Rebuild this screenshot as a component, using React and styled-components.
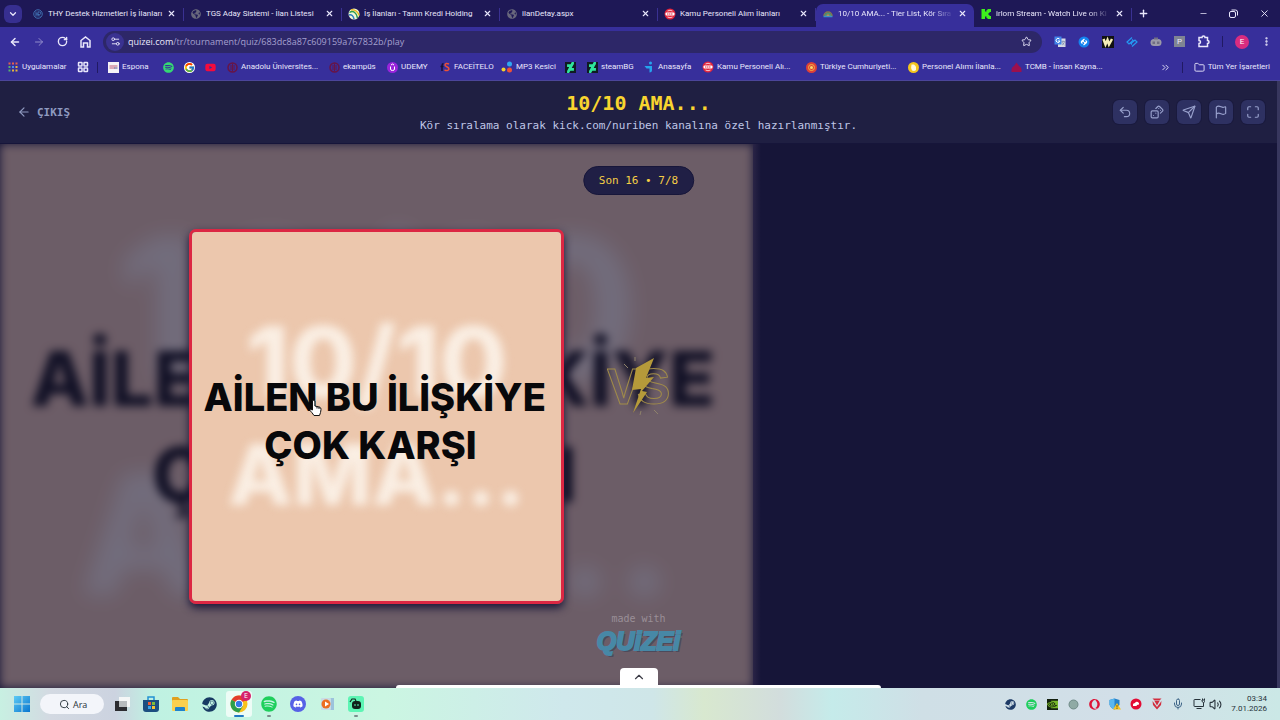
import styled, { createGlobalStyle } from "styled-components";
import {
  ArrowLeft,
  ArrowRight,
  ChevronDown,
  ChevronUp,
  ChevronsRight,
  Dices,
  EllipsisVertical,
  Flag,
  Folder,
  LayoutGrid,
  Maximize,
  Mic,
  Minus,
  Plus,
  RotateCw,
  Search,
  Send,
  Settings2,
  Star,
  Undo2,
  Volume2,
  X,
} from "lucide-react";
import {
  FaDeviantart,
  FaDiscord,
  FaGlobeAmericas,
  FaOpera,
  FaSpotify,
  FaSteam,
  FaYoutube,
} from "react-icons/fa";
import { FcGoogle } from "react-icons/fc";
import { SiNvidia } from "react-icons/si";

/* ---------- small drawings ---------- */

const ThyIcon = () => (
  <svg width="10" height="10" viewBox="0 0 20 20" fill="none" stroke="#3f6fb0" strokeWidth="2">
    <circle cx="10" cy="10" r="8.5" />
    <path d="M6 5v10M6 10h4M10 5v10M10 6h3a2 2 0 0 1 0 5h-3l4 4" />
  </svg>
);

const TarimIcon = () => (
  <svg width="12" height="12" viewBox="0 0 24 24">
    <circle cx="12" cy="12" r="11" fill="#f1f6d8" />
    <path d="M3 9c7-5 14 0 16 11" stroke="#2c9a4b" strokeWidth="3" fill="none" />
    <path d="M6 4c8-2 15 5 16 11" stroke="#e9b91e" strokeWidth="3" fill="none" />
    <path d="M2 14c5-2 9 2 10 8" stroke="#2b7fc3" strokeWidth="3" fill="none" />
  </svg>
);

const KamuIcon = () => (
  <svg width="12" height="12" viewBox="0 0 24 24">
    <circle cx="12" cy="12" r="11" fill="#e3243c" />
    <rect x="3" y="9" width="18" height="6" rx="2" fill="#fff" />
    <path d="M6 12h12" stroke="#e3243c" strokeWidth="2" strokeDasharray="3 1" />
    <path d="M7 6q5-3 10 0M7 18q5 3 10 0" stroke="#fff" strokeWidth="1.5" fill="none" />
  </svg>
);

const RainbowIcon = () => (
  <svg width="10" height="10" viewBox="0 0 20 20" fill="none" strokeWidth="3">
    <path d="M2 14a8 8 0 0 1 16 0" stroke="#8a7a4a" />
    <path d="M5 14a5 5 0 0 1 10 0" stroke="#4f9a6c" />
    <path d="M8 14a2 2 0 0 1 4 0" stroke="#d2a045" />
    <path d="M1 15h18" stroke="#3c8fc4" strokeWidth="3" />
  </svg>
);

const KickIcon = () => (
  <svg width="10" height="10" viewBox="0 0 20 20" fill="#3df01c">
    <path d="M1 0h7v5h3V2h2V0h7v6h-3v2h-2v4h2v2h3v6h-7v-2h-2v-3H8v5H1z" />
  </svg>
);

const AppsIcon = () => (
  <svg width="10" height="10" viewBox="0 0 20 20">
    <path d="M1 1h4v4H1zM8 1h4v4H8zM15 1h4v4h-4z" fill="#e8604c" />
    <path d="M1 8h4v4H1z" fill="#58b36a" />
    <path d="M8 8h4v4H8z" fill="#4b8df0" />
    <path d="M15 8h4v4h-4zM8 15h4v4H8zM15 15h4v4h-4z" fill="#e5b43a" />
    <path d="M1 15h4v4H1z" fill="#58b36a" />
  </svg>
);

const EsponaIcon = () => (
  <svg width="11" height="11" viewBox="0 0 22 22">
    <rect width="22" height="22" fill="#f5f3f6" />
    <path d="M3 8h16M3 12h10" stroke="#c1607a" strokeWidth="2" />
    <path d="M12 12h7" stroke="#58568b" strokeWidth="2" />
  </svg>
);

const AnadoluIcon = () => (
  <svg width="11" height="11" viewBox="0 0 22 22" fill="none" stroke="#671447" strokeWidth="3">
    <circle cx="11" cy="11" r="9" />
    <path d="M11 3v16M8 6v10M14 6v10" strokeWidth="2" />
  </svg>
);

const UdemyIcon = () => (
  <svg width="11" height="11" viewBox="0 0 22 22" fill="none" stroke="#fff" strokeWidth="2">
    <circle cx="11" cy="11" r="11" fill="#9a25dc" stroke="none" />
    <path d="M7 9v5a4 3 0 0 0 8 0V9M8 6l3-2 3 2" />
  </svg>
);

const FaceitIcon = () => (
  <svg width="10" height="10" viewBox="0 0 20 20" fill="none" strokeWidth="3">
    <path d="M4 18V7q0-3 3-4M1 9h6" stroke="#171238" />
    <path d="M18 4q-7-3-8 2c0 4 8 3 8 8q-2 5-9 2" stroke="#ef5136" />
  </svg>
);

const Mp3Icon = () => (
  <svg width="12" height="12" viewBox="0 0 24 24">
    <circle cx="17" cy="6" r="5" fill="#2fa8f2" />
    <circle cx="5" cy="17" r="4" fill="#f3d12d" />
    <circle cx="17" cy="18" r="5" fill="#ee5136" />
  </svg>
);

const AnasayfaIcon = () => (
  <svg width="10" height="12" viewBox="0 0 20 24" fill="#25a4ee">
    <circle cx="13" cy="4" r="3" />
    <path d="M1 10h15v9q0 4-5 4v-8H5z" />
  </svg>
);

const TcIcon = () => (
  <svg width="11" height="11" viewBox="0 0 22 22">
    <circle cx="11" cy="11" r="11" fill="#dd3f38" />
    <circle cx="11" cy="11" r="6" fill="none" stroke="#f0b642" strokeWidth="2" />
    <circle cx="11" cy="11" r="3" fill="#fadb6a" />
  </svg>
);

const PersonelIcon = () => (
  <svg width="11" height="11" viewBox="0 0 22 22">
    <circle cx="11" cy="11" r="11" fill="#f4c51e" />
    <path d="M7 5h5l4 4v7q-3 3-8 1-3-5-1-12z" fill="#fff8dc" />
  </svg>
);

const TcmbIcon = () => (
  <svg width="11" height="11" viewBox="0 0 22 22" fill="#9c104d">
    <path d="M11 1l5 7q5 2 5 7v5H1v-5q0-5 5-7z" />
  </svg>
);

const TranslateIcon = () => (
  <svg width="12" height="12" viewBox="0 0 24 24">
    <rect x="8" y="5" width="15" height="17" fill="#d6dbe4" />
    <rect x="1" y="1" width="14" height="16" fill="#4385ea" />
    <path d="M11 6a4 4 0 1 0 1 4H8" stroke="#fff" strokeWidth="2" fill="none" />
    <path d="M15 11h7M18 9v2M21 12q-2 5-5 6M16 12q2 4 5 6" stroke="#5a6f96" fill="none" />
  </svg>
);

const ShazamIcon = ({ disc }) => (
  <svg width="12" height="12" viewBox="0 0 24 24" fill="none" stroke={disc ? "#fff" : "#2499f2"} strokeWidth="2.4">
    {disc && <circle cx="12" cy="12" r="11" fill="#1483ee" stroke="none" />}
    {disc ? (
      <path d="M13 6l-5 4q-3 3 1 5M11 18l5-4q3-3-1-5M9 12l3-2M12 14l3-2" />
    ) : (
      <path d="M12 3L2 12l4 4 7-6M8 13l4 4M12 21l10-9-4-4-7 6M12 7l4 4" />
    )}
  </svg>
);

const WIcon = () => (
  <svg width="12" height="12" viewBox="0 0 24 24">
    <rect width="24" height="24" fill="#111" />
    <path d="M3 6l4 11 4-9 3 9 6-11" fill="none" stroke="#f7eeb8" strokeWidth="5" />
  </svg>
);

const MaskIcon = () => (
  <svg width="12" height="12" viewBox="0 0 24 24">
    <rect x="1" y="6" width="22" height="14" rx="7" fill="#9b9aa8" />
    <path d="M5 11h5v5H5zM14 11h5v5h-5zM8 3h8v4H8z" fill="#706e83" />
  </svg>
);

const HomeIcon = () => (
  <svg width="11" height="12" viewBox="0 0 22 24" fill="none" stroke="currentColor" strokeWidth="3">
    <path d="M2 22V9l9-7 9 7v13h-5v-8H7v8z" />
  </svg>
);

const PuzzleIcon = () => (
  <svg width="13" height="13" viewBox="0 0 26 26" fill="none" stroke="currentColor" strokeWidth="3">
    <path d="M4 5h6a3 3 0 0 1 6 0h5v6a3 3 0 0 1 0 6v6H4v-6a3 3 0 0 0 0-6z" />
  </svg>
);

const RestoreIcon = () => (
  <svg width="9" height="9" viewBox="0 0 18 18" fill="none" stroke="currentColor" strokeWidth="2">
    <rect x="1" y="5" width="12" height="12" rx="3" />
    <path d="M5 2h8q4 0 4 4v7" />
  </svg>
);

const WindowsIcon = () => (
  <svg width="16" height="16" viewBox="0 0 16 16">
    <defs>
      <linearGradient id="win" x1="0" y1="0" x2="1" y2="1">
        <stop stopColor="#5fcbf5" />
        <stop offset="1" stopColor="#0876cf" />
      </linearGradient>
    </defs>
    <path d="M0 0h7.5v7.5H0zM8.500 0H16v7.500H8.500zM0 8.500h7.500V16H0zM8.500 8.500H16V16H8.500z" fill="url(#win)" />
  </svg>
);

const TaskViewIcon = () => (
  <svg width="16" height="16" viewBox="0 0 16 16">
    <rect x="5" y="1" width="11" height="10" fill="#f5f7f7" />
    <path d="M1 5h4v6h8v4H1z" fill="#2c2c30" />
    <path d="M5 5h8v6H5z" fill="#b7bbbd" />
  </svg>
);

const StoreIcon = () => (
  <svg width="16" height="16" viewBox="0 0 16 16">
    <path d="M5 4V1h6v3" fill="none" stroke="#2391d2" strokeWidth="1.500" />
    <path d="M0 4h16v9q0 3-3 3H3q-3 0-3-3z" fill="#1c4f80" />
    <path d="M5 6h3v3H5z" fill="#ef5b36" />
    <path d="M9 6h3v3H9z" fill="#7ebd3a" />
    <path d="M5 10h3v3H5z" fill="#39a5ee" />
    <path d="M9 10h3v3H9z" fill="#f8c332" />
  </svg>
);

const ExplorerIcon = () => (
  <svg width="16" height="16" viewBox="0 0 16 16">
    <path d="M0 2q0-1 1-1h5l2 2h7q1 0 1 1v6H0z" fill="#e0a01f" />
    <rect y="4" width="16" height="11" rx="1" fill="#fbd04f" />
    <path d="M3 15v-3q0-1 1-1h8q1 0 1 1v3z" fill="#1f83cc" />
  </svg>
);

const ChromeIcon = () => (
  <svg width="18" height="18" viewBox="0 0 18 18">
    <circle cx="9" cy="9" r="8.500" fill="#f8c21c" />
    <path d="M9 9L1.600 4.800A8.500 8.500 0 0 1 16.400 4.800z" fill="#e33b2e" />
    <path d="M9 9L1.600 4.800A8.500 8.500 0 0 0 9 17.500l4-6.500z" fill="#2d9e4b" />
    <circle cx="9" cy="9" r="4.200" fill="#fff" />
    <circle cx="9" cy="9" r="3.200" fill="#3478e6" />
  </svg>
);

const MediaIcon = () => (
  <svg width="14" height="14" viewBox="0 0 14 14">
    <rect x="3" y="1" width="11" height="12" fill="#9cc3dc" />
    <rect x="1" y="1" width="10" height="12" rx="1" fill="#c9dbe5" />
    <circle cx="6" cy="7" r="4.500" fill="#ec6d21" />
    <path d="M5 4.500v5L9 7z" fill="#fff" />
  </svg>
);

const RobotIcon = () => (
  <svg width="16" height="16" viewBox="0 0 16 16">
    <rect width="16" height="16" rx="3" fill="#5df5b4" />
    <path d="M2 6l2-3h3l1 2" fill="none" stroke="#10231d" strokeWidth="1.200" />
    <rect x="4" y="5" width="9" height="8" rx="3" fill="#10231d" />
    <path d="M7 8v2M10 8v2" stroke="#5df5b4" />
  </svg>
);

const StatusIcon = () => (
  <svg width="11" height="11" viewBox="0 0 11 11">
    <circle cx="5.500" cy="5.500" r="4.500" fill="#8faaa5" stroke="#6f8a87" />
  </svg>
);

const ShieldIcon = () => (
  <svg width="12" height="12" viewBox="0 0 24 24">
    <path d="M11 1l10 3v9q-2 7-10 10Q3 20 1 13V4z" fill="#2481c9" />
    <path d="M11 1v22Q3 20 1 13V4z" fill="#5ab7ee" />
    <path d="M16 10l8 13H8z" fill="#f7c425" />
    <path d="M16 14v5M16 20v2" stroke="#4a3a10" strokeWidth="1.500" />
  </svg>
);

const RedDiscIcon = () => (
  <svg width="12" height="12" viewBox="0 0 24 24">
    <circle cx="12" cy="12" r="11" fill="#e30b35" />
    <path d="M6 16V13q0-3 4-3 2-4 6-2 3 2 2 5l-4 1-1 2z" fill="#fff" />
  </svg>
);

const ValorIcon = () => (
  <svg width="10" height="12" viewBox="0 0 20 24" fill="#d22d3e">
    <path d="M1 1h18l-4 4H5zM5 6h10l-5 9z" />
    <path d="M1 6l9 12 9-12-1 8-8 9-8-9z" />
  </svg>
);

const NetworkIcon = () => (
  <svg width="12" height="12" viewBox="0 0 24 24" fill="none" stroke="currentColor" strokeWidth="2">
    <path d="M15 3H3q-1 0-1 1v12q0 1 1 1h18v-5M7 21h10" />
    <path d="M19 1v3M23 1v3M18 4h6v3q-3 4-6 0zM21 9v3" />
  </svg>
);

const VersusMark = () => (
  <svg width="64" height="60" viewBox="0 0 64 60">
    <g fill="none" stroke="#a08b49" strokeWidth="1" fontFamily="Liberation Sans" fontWeight="700" fontSize="50">
      <text x="0" y="48">V</text>
      <text x="30" y="48">S</text>
    </g>
    <path d="M47 2L29 12l-4 22 9-1-8 24 14-21-5-1 12-14-8 1z" fill="#b59a3a" />
    <path d="M17 8l4 4M28 1v4M47 54l4 4M34 55l-1 4" stroke="#8f826a" />
  </svg>
);

const HandCursor = () => (
  <svg width="13" height="18" viewBox="0 0 13 18" fill="#fff" stroke="#111" strokeWidth="1">
    <path d="M3.500 10V2q1.200-1.500 2.400 0v5l5 1.200q1.200.5 1.100 2.300-.2 3-1.500 6H5Q3 13.500 1 11.500 1.500 9.500 3.500 11z" />
    <path d="M8 7.500v2M10 8v2" />
  </svg>
);

/* ---------- data ---------- */

const tabs = [
  { title: "THY Destek Hizmetleri İş İlanları", icon: <ThyIcon /> },
  { title: "TGS Aday Sistemi - İlan Listesi", icon: <FaGlobeAmericas size={10} color="#68677c" /> },
  { title: "İş İlanları - Tarım Kredi Holding", icon: <TarimIcon /> },
  { title: "ilanDetay.aspx", icon: <FaGlobeAmericas size={10} color="#68677c" /> },
  { title: "Kamu Personeli Alım İlanları", icon: <KamuIcon /> },
  { title: "10/10 AMA... - Tier List, Kör Sıra", icon: <RainbowIcon />, active: true, fade: true },
  { title: "irlom Stream - Watch Live on Ki", icon: <KickIcon />, fade: true },
];

const deviant = (
  <FaDeviantart size={11} color="#2fe59c" style={{ background: "#101b22" }} />
);

const bookmarks = [
  { label: "Uygulamalar", icon: <AppsIcon />, width: 70 },
  { name: "Gruplar", icon: <LayoutGrid size={12} strokeWidth={3} />, width: 20 },
  { divider: true },
  { label: "Espona", icon: <EsponaIcon />, width: 55 },
  { name: "Spotify", icon: <FaSpotify size={11} color="#35d873" />, width: 21 },
  { name: "Google", icon: <FcGoogle size={11} style={{ background: "#fff", borderRadius: 6 }} />, width: 21 },
  { name: "YouTube", icon: <FaYoutube size={11} color="#f50b3c" />, width: 22 },
  { label: "Anadolu Üniversites...", icon: <AnadoluIcon />, width: 102 },
  { label: "ekampüs", icon: <AnadoluIcon />, width: 58 },
  { label: "UDEMY", icon: <UdemyIcon />, width: 53 },
  { label: "FACEİTELO", icon: <FaceitIcon />, width: 62 },
  { label: "MP3 Kesici", icon: <Mp3Icon />, width: 63 },
  { name: "DeviantArt", icon: deviant, width: 22 },
  { label: "steamBG", icon: deviant, width: 57 },
  { label: "Anasayfa", icon: <AnasayfaIcon />, width: 59 },
  { label: "Kamu Personeli Alı...", icon: <KamuIcon />, width: 103 },
  { label: "Türkiye Cumhuriyeti...", icon: <TcIcon />, width: 102 },
  { label: "Personel Alımı İlanla...", icon: <PersonelIcon />, width: 103 },
  { label: "TCMB - İnsan Kayna...", icon: <TcmbIcon />, width: 103 },
];

const actions = [
  { name: "Geri al", Icon: Undo2 },
  { name: "Rastgele", Icon: Dices },
  { name: "Paylaş", Icon: Send },
  { name: "Bildir", Icon: Flag },
  { name: "Tam ekran", Icon: Maximize },
];

const tray = [
  { name: "Steam", icon: <FaSteam size={11} color="#1d3a66" /> },
  { name: "Spotify", icon: <FaSpotify size={11} color="#1ecf5c" /> },
  { name: "Nvidia", icon: <SiNvidia size={11} color="#77b82a" style={{ background: "#14210f" }} /> },
  { name: "Durum", icon: <StatusIcon /> },
  { name: "Opera", icon: <FaOpera size={11} color="#dd1437" /> },
  { name: "Güvenlik", icon: <ShieldIcon /> },
  { name: "Bulut", icon: <RedDiscIcon /> },
  { name: "Vanguard", icon: <ValorIcon /> },
  { name: "Mikrofon", icon: <Mic size={12} color="#3e6487" /> },
];

/* ---------- parts ---------- */

const BrowserChrome = () => (
  <Chrome>
    <TabStrip>
      <TabSearch type="button" aria-label="Sekmelerde ara">
        <ChevronDown size={10} strokeWidth={3} />
      </TabSearch>
      {tabs.map((tab) => (
        <Tab key={tab.title} $active={tab.active}>
          <IconSlot>{tab.icon}</IconSlot>
          <TabTitle type="button" $fade={tab.fade}>
            {tab.title}
          </TabTitle>
          <IconButton type="button" aria-label="Sekmeyi kapat">
            <X size={9} strokeWidth={3} />
          </IconButton>
        </Tab>
      ))}
      <NewTab type="button" aria-label="Yeni sekme">
        <Plus size={11} strokeWidth={3} />
      </NewTab>
      <WindowControls>
        <IconButton type="button" aria-label="Küçült">
          <Minus size={9} />
        </IconButton>
        <IconButton type="button" aria-label="Geri yükle">
          <RestoreIcon />
        </IconButton>
        <IconButton type="button" aria-label="Kapat">
          <X size={11} />
        </IconButton>
      </WindowControls>
    </TabStrip>
    <Toolbar>
      <NavButtons>
        <IconButton type="button" aria-label="Geri">
          <ArrowLeft size={12} strokeWidth={3} />
        </IconButton>
        <IconButton type="button" aria-label="İleri" $dim>
          <ArrowRight size={12} />
        </IconButton>
        <IconButton type="button" aria-label="Yenile">
          <RotateCw size={11} strokeWidth={3} />
        </IconButton>
        <IconButton type="button" aria-label="Ana sayfa">
          <HomeIcon />
        </IconButton>
      </NavButtons>
      <Omnibox>
        <SiteInfo type="button" aria-label="Site bilgileri">
          <Settings2 size={11} />
        </SiteInfo>
        <label htmlFor="url">quizei.com</label>
        <UrlInput
          id="url"
          type="text"
          defaultValue="/tr/tournament/quiz/683dc8a87c609159a767832b/play"
        />
        <IconButton type="button" aria-label="Yer işareti ekle">
          <Star size={11} />
        </IconButton>
      </Omnibox>
      <Extensions>
        <TranslateIcon />
        <ShazamIcon disc />
        <WIcon />
        <ShazamIcon />
        <MaskIcon />
        <ParkBadge>P</ParkBadge>
        <PuzzleIcon />
        <Divider />
        <Avatar type="button">E</Avatar>
        <IconButton type="button" aria-label="Menü">
          <EllipsisVertical size={11} strokeWidth={3} />
        </IconButton>
      </Extensions>
    </Toolbar>
    <Bookmarks>
      {bookmarks.map((item, i) =>
        item.divider ? (
          <BookmarkDivider key={i} />
        ) : (
          <Bookmark key={i} href="#" aria-label={item.name} $width={item.width}>
            <IconSlot>{item.icon}</IconSlot>
            {item.label}
          </Bookmark>
        )
      )}
      <BookmarksEnd>
        <IconButton type="button" aria-label="Diğer yer işaretleri">
          <ChevronsRight size={11} />
        </IconButton>
        <Divider />
        <Bookmark href="#">
          <Folder size={11} />
          Tüm Yer İşaretleri
        </Bookmark>
      </BookmarksEnd>
    </Bookmarks>
  </Chrome>
);

const QuestionArt = ({ scale = 1, hidden }) => (
  <Art aria-hidden={hidden}>
    <Ghost $scale={scale}>
      <GhostLine $size={98 * scale} $height={118 * scale}>
        10/10
      </GhostLine>
      <GhostLine $size={84 * scale} $height={108 * scale}>
        AMA...
      </GhostLine>
    </Ghost>
    <Caption $scale={scale}>
      AİLEN BU İLİŞKİYE
      <br />
      ÇOK KARŞI&nbsp;
    </Caption>
  </Art>
);

const QuizHeader = () => (
  <Header>
    <ExitLink href="#">
      <ArrowLeft size={14} />
      ÇIKIŞ
    </ExitLink>
    <Heading>
      <Title>10/10 AMA...</Title>
      <Subtitle>Kör sıralama olarak kick.com/nuriben kanalına özel hazırlanmıştır.</Subtitle>
    </Heading>
    <Actions>
      {actions.map(({ name, Icon }) => (
        <ActionButton key={name} type="button" aria-label={name}>
          <Icon size={14} />
        </ActionButton>
      ))}
    </Actions>
  </Header>
);

const Arena = () => (
  <Stage>
    <LeftSide>
      <Backdrop>
        <QuestionArt scale={2} hidden />
      </Backdrop>
      <Card type="button">
        <QuestionArt />
      </Card>
    </LeftSide>
    <RightSide />
    <RoundBadge>Son 16 • 7/8</RoundBadge>
    <Versus>
      <VersusMark />
    </Versus>
    <MadeWith>
      made with
      <Brand>QUiZEi</Brand>
    </MadeWith>
    <Drawer>
      <DrawerTab type="button" aria-label="Paneli aç">
        <ChevronUp size={14} />
      </DrawerTab>
      <DrawerEdge />
    </Drawer>
    <Pointer>
      <HandCursor />
    </Pointer>
  </Stage>
);

const Taskbar = () => (
  <Bar>
    <TaskButton type="button" aria-label="Başlat">
      <WindowsIcon />
    </TaskButton>
    <SearchButton type="button">
      <Search size={11} />
      Ara
    </SearchButton>
    <AppList>
      <TaskButton type="button" aria-label="Görev görünümü">
        <TaskViewIcon />
      </TaskButton>
      <TaskButton type="button" aria-label="Mağaza">
        <StoreIcon />
      </TaskButton>
      <TaskButton type="button" aria-label="Dosya Gezgini">
        <ExplorerIcon />
      </TaskButton>
      <TaskButton type="button" aria-label="Steam">
        <FaSteam size={15} color="#173a63" />
      </TaskButton>
      <TaskButton type="button" aria-label="Chrome" $active>
        <ChromeIcon />
        <Notice>E</Notice>
      </TaskButton>
      <TaskButton type="button" aria-label="Spotify" $open>
        <FaSpotify size={16} color="#1ecf5c" />
      </TaskButton>
      <TaskButton type="button" aria-label="Discord">
        <Disc>
          <FaDiscord size={10} />
        </Disc>
      </TaskButton>
      <TaskButton type="button" aria-label="Medya Oynatıcı">
        <MediaIcon />
      </TaskButton>
      <TaskButton type="button" aria-label="Robot" $open>
        <RobotIcon />
      </TaskButton>
    </AppList>
    <Tray>
      {tray.map((item) => (
        <TrayButton key={item.name} type="button" aria-label={item.name}>
          {item.icon}
        </TrayButton>
      ))}
      <TrayGroup>
        <NetworkIcon />
        <Volume2 size={13} />
      </TrayGroup>
      <Clock>
        <span>03:34</span>
        <span>7.01.2026</span>
      </Clock>
    </Tray>
  </Bar>
);

const App = () => (
  <>
    <GlobalStyle />
    <Desktop>
      <BrowserChrome />
      <Page>
        <QuizHeader />
        <Arena />
      </Page>
      <Taskbar />
    </Desktop>
  </>
);

/* ---------- styles ---------- */

const GlobalStyle = createGlobalStyle`
  * {
    box-sizing: border-box;
  }
  body {
    margin: 0;
    background: #171638;
  }
  button, input {
    font: inherit;
    color: inherit;
    border: 0;
    padding: 0;
    background: none;
  }
  a {
    color: inherit;
    text-decoration: none;
  }
  svg {
    display: block;
    flex: none;
  }
`;

const Desktop = styled.div`
  display: flex;
  flex-direction: column;
  height: 100vh;
  overflow: hidden;
`;

const Chrome = styled.div`
  color: #e9e7fb;
  background: #372f9b;
  border-bottom: 1px solid #4b459a;
  font: 8px/12px Roboto, "Noto Sans", sans-serif;
`;

const TabStrip = styled.div`
  display: flex;
  align-items: center;
  height: 27px;
  background: #1e1856;
`;

const TabSearch = styled.button`
  display: grid;
  place-items: center;
  width: 18px;
  height: 18px;
  margin: 0 4px;
  border-radius: 6px;
  background: #372f90;
`;

const Tab = styled.div`
  display: flex;
  align-items: center;
  gap: 4px;
  flex: 0 1 158px;
  min-width: 0;
  align-self: flex-end;
  height: 23px;
  padding: 0 7px 4px 6px;
  border-radius: 7px 7px 0 0;
  background: ${({ $active }) => ($active ? "#372f9b" : "none")};
  border-right: ${({ $active }) => ($active ? "0" : "1px solid transparent")};
  border-image: ${({ $active }) =>
    $active ? "none" : "linear-gradient(transparent 20%, #3a3192 20% 70%, transparent 70%) 1"};
`;

const TabTitle = styled.button`
  flex: 1;
  min-width: 0;
  text-align: left;
  white-space: nowrap;
  overflow: hidden;
  mask-image: ${({ $fade }) => ($fade ? "linear-gradient(to right, #000 80%, transparent)" : "none")};
`;

const IconSlot = styled.span`
  display: grid;
  place-items: center;
  flex: none;
  width: 12px;
  height: 12px;
`;

const IconButton = styled.button`
  display: grid;
  place-items: center;
  opacity: ${({ $dim }) => ($dim ? 0.5 : 1)};
`;

const NewTab = styled(IconButton)`
  margin-left: 6px;
`;

const WindowControls = styled.div`
  display: flex;
  gap: 21px;
  margin-left: auto;
  padding-right: 10px;
`;

const Toolbar = styled.div`
  display: flex;
  align-items: center;
  height: 29px;
`;

const NavButtons = styled.div`
  display: flex;
  gap: 12px;
  padding: 0 12px 0 9px;
`;

const Omnibox = styled.div`
  display: flex;
  align-items: center;
  flex: 1;
  height: 22px;
  padding: 0 10px 0 3px;
  border-radius: 11px;
  background: #2d2768;
  font: 9px/12px "Open Sans", "Noto Sans", sans-serif;
`;

const UrlInput = styled.input`
  flex: 1;
  min-width: 0;
  color: #a5a0cf;
  outline: none;
`;

const SiteInfo = styled.button`
  display: grid;
  place-items: center;
  width: 18px;
  height: 18px;
  margin-right: 4px;
  border-radius: 9px;
  background: #3a3291;
`;

const Extensions = styled.div`
  display: flex;
  align-items: center;
  gap: 12px;
  padding: 0 8px 0 12px;
`;

const ParkBadge = styled.span`
  width: 11px;
  height: 11px;
  line-height: 11px;
  text-align: center;
  background: #7f8493;
`;

const Divider = styled.span`
  width: 1px;
  height: 11px;
  background: #211a63;
`;

const Avatar = styled.button`
  width: 14px;
  height: 14px;
  line-height: 14px;
  border-radius: 50%;
  color: #fff;
  background: #d92c80;
`;

const Bookmarks = styled.nav`
  display: flex;
  align-items: center;
  height: 24px;
  padding: 0 10px 2px 7px;
`;

const Bookmark = styled.a`
  display: flex;
  align-items: center;
  gap: 3px;
  flex: none;
  width: ${({ $width }) => ($width ? `${$width}px` : "auto")};
  white-space: nowrap;
`;

const BookmarkDivider = styled(Divider)`
  margin-right: 9px;
`;

const BookmarksEnd = styled.div`
  display: flex;
  align-items: center;
  gap: 11px;
  margin-left: auto;
`;

const Page = styled.main`
  display: flex;
  flex-direction: column;
  flex: 1;
  min-height: 0;
  border-right: 3px solid #38375e;
  background: #171638;
  font-family: "DejaVu Sans Mono", monospace;
`;

const Header = styled.header`
  display: grid;
  grid-template-columns: 1fr auto 1fr;
  align-items: center;
  height: 63px;
  padding: 0 12px;
  background: #1f1f42;
  border-bottom: 1px solid #16153a;
`;

const ExitLink = styled.a`
  display: flex;
  align-items: center;
  gap: 6px;
  padding-left: 5px;
  color: #8f9ac0;
  font-size: 11px;
  font-weight: 700;
`;

const Heading = styled.div`
  padding-top: 2px;
  text-align: center;
`;

const Title = styled.h1`
  margin: 0;
  color: #f9d52f;
  font-size: 20px;
  line-height: 25px;
`;

const Subtitle = styled.p`
  margin: 0;
  color: #bfc6e6;
  font-size: 11px;
  line-height: 20px;
`;

const Actions = styled.div`
  display: flex;
  justify-content: flex-end;
  gap: 8px;
`;

const ActionButton = styled.button`
  display: grid;
  place-items: center;
  width: 24px;
  height: 24px;
  border-radius: 6px;
  color: #98a0cc;
  background: #2e3162;
  box-shadow: 0 0 0 1px #1a1a3e;
`;

const Stage = styled.section`
  position: relative;
  display: flex;
  flex: 1;
  min-height: 0;
`;

const LeftSide = styled.div`
  position: relative;
  display: grid;
  place-items: center;
  flex: 0 0 59%;
  overflow: hidden;
`;

const RightSide = styled.div`
  flex: 1;
  background: linear-gradient(to right, #2a2446, #161538 8px);
`;

const Backdrop = styled.div`
  position: absolute;
  inset: 0;
  display: flex;
  opacity: 0.4;
  filter: blur(5px);
`;

const Art = styled.span`
  position: relative;
  display: grid;
  place-items: center;
  flex: 1;
  width: 100%;
  height: 100%;
  overflow: hidden;
  background: #ecc7ad;
  font-family: Inter, "Liberation Sans", sans-serif;
  font-weight: 800;
  text-align: center;
  white-space: nowrap;
`;

const Ghost = styled.span`
  grid-area: 1 / 1;
  color: #faefe4;
  filter: blur(${({ $scale }) => 5 * $scale}px);
`;

const GhostLine = styled.span`
  display: block;
  font-size: ${({ $size }) => $size}px;
  line-height: ${({ $height }) => $height}px;
`;

const Caption = styled.span`
  grid-area: 1 / 1;
  z-index: 1;
  padding-top: ${({ $scale }) => 10 * $scale}px;
  padding-right: ${({ $scale }) => 4 * $scale}px;
  color: #08080a;
  font-size: ${({ $scale }) => 38 * $scale}px;
  line-height: ${({ $scale }) => 48 * $scale}px;
`;

const Card = styled.button`
  z-index: 1;
  display: flex;
  width: 375px;
  height: 375px;
  border: 3px solid #dc2743;
  border-radius: 7px;
  overflow: hidden;
  box-shadow: 0 4px 8px #1b1738;
  cursor: pointer;
`;

const RoundBadge = styled.div`
  position: absolute;
  top: 22px;
  left: 50%;
  z-index: 2;
  transform: translateX(-50%);
  padding: 0 15px;
  border: 1px solid #17163a;
  border-radius: 15px;
  color: #f5ce45;
  background: #201f45;
  font-size: 11px;
  line-height: 27px;
  white-space: nowrap;
`;

const Versus = styled.div`
  position: absolute;
  top: 50%;
  left: 50%;
  transform: translate(-50%, -100%);
`;

const MadeWith = styled.div`
  position: absolute;
  bottom: 32px;
  left: 50%;
  display: flex;
  flex-direction: column;
  align-items: center;
  transform: translateX(-50%);
  color: #9a8f97;
  font-size: 10px;
  line-height: 14px;
`;

const Brand = styled.strong`
  color: #4788a6;
  font: italic 700 25px/30px "Liberation Sans", Arial, sans-serif;
  -webkit-text-stroke: 2px #4788a6;
  text-shadow: 2px 2px 0 #4d4a5b;
`;

const Drawer = styled.div`
  position: absolute;
  bottom: 0;
  left: 31%;
  right: 31%;
  display: flex;
  flex-direction: column;
  align-items: center;
`;

const DrawerTab = styled.button`
  display: grid;
  place-items: center;
  width: 38px;
  height: 17px;
  border-radius: 4px 4px 0 0;
  color: #3b3b45;
  background: #fff;
`;

const DrawerEdge = styled.div`
  width: 100%;
  height: 3px;
  border-radius: 3px 3px 0 0;
  background: #fff;
`;

const Pointer = styled.div`
  position: absolute;
  top: 255px;
  left: 309px;
  z-index: 3;
  pointer-events: none;
`;

const Bar = styled.footer`
  display: flex;
  align-items: center;
  height: 32px;
  padding: 0 13px 0 10px;
  color: #27323a;
  background: linear-gradient(
    to right,
    #c8f0e2 0%,
    #d3d9e2 4%,
    #ccd3e0 9%,
    #bff2e2 12%,
    #cbf6e2 30%,
    #cfe8ec 44%,
    #cfe6e8 51%,
    #d8e8cf 55%,
    #d2dddd 61%,
    #c5ebea 65%,
    #cfdfe6 72%,
    #d2dfe8 88%,
    #cbe8e6 100%
  );
  font: 9px/11px "Open Sans", "Noto Sans", sans-serif;
`;

const TaskButton = styled.button`
  position: relative;
  display: grid;
  place-items: center;
  width: ${({ $active }) => ($active ? 26 : 24)}px;
  height: 26px;
  border-radius: 3px;
  background: ${({ $active }) => ($active ? "rgba(255, 255, 255, 0.7)" : "none")};

  &::after {
    content: "";
    position: absolute;
    bottom: 0;
    width: ${({ $active }) => ($active ? 10 : 4)}px;
    height: 2px;
    border-radius: 1px;
    background: ${({ $active, $open }) => ($active ? "#1f78c4" : $open ? "#7b8c8c" : "none")};
  }
`;

const SearchButton = styled.button`
  display: flex;
  align-items: center;
  gap: 3px;
  width: 64px;
  height: 20px;
  margin: 0 6px;
  padding-left: 19px;
  border-radius: 10px;
  background: #f3f5fa;
`;

const AppList = styled.div`
  display: flex;
  gap: 5px;
`;

const Notice = styled.span`
  position: absolute;
  top: 0;
  right: 1px;
  width: 10px;
  height: 10px;
  border-radius: 50%;
  color: #fff;
  background: #d5206b;
  font-size: 7px;
  line-height: 10px;
`;

const Disc = styled.span`
  display: grid;
  place-items: center;
  width: 16px;
  height: 16px;
  border-radius: 50%;
  color: #fff;
  background: #5661e6;
`;

const Tray = styled.div`
  display: flex;
  align-items: center;
  gap: 9px;
  margin-left: auto;
`;

const TrayButton = styled.button`
  display: grid;
  place-items: center;
  width: 12px;
  height: 12px;
`;

const TrayGroup = styled.div`
  display: flex;
  align-items: center;
  gap: 4px;
`;

const Clock = styled.div`
  display: flex;
  flex-direction: column;
  text-align: right;
  font: 8px/10px Roboto, "Noto Sans", sans-serif;
`;

export default App;
